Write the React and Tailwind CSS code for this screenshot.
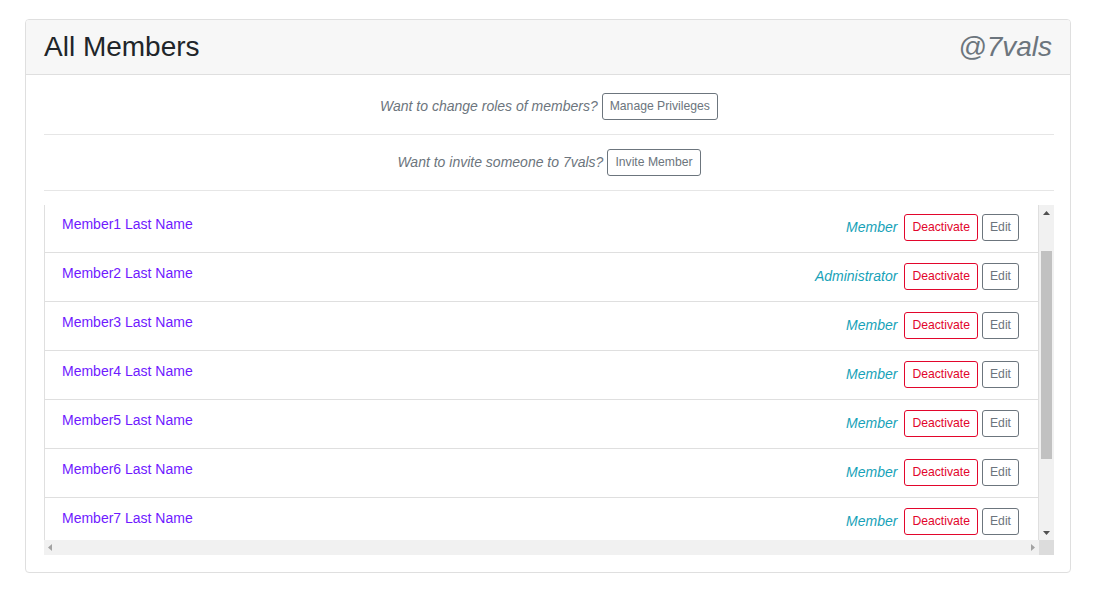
import { useEffect, useRef } from 'react'

const members = [
  { name: 'Owner Last Name', role: 'Administrator' },
  { name: 'Member1 Last Name', role: 'Member' },
  { name: 'Member2 Last Name', role: 'Administrator' },
  { name: 'Member3 Last Name', role: 'Member' },
  { name: 'Member4 Last Name', role: 'Member' },
  { name: 'Member5 Last Name', role: 'Member' },
  { name: 'Member6 Last Name', role: 'Member' },
  { name: 'Member7 Last Name', role: 'Member' },
  { name: 'Member8 Last Name', role: 'Member' },
  { name: 'Member9 Last Name', role: 'Member' },
]

function SmallButton({ children, tone = 'gray' }) {
  const colors =
    tone === 'red'
      ? 'border-[#e2062c] text-[#e2062c]'
      : 'border-[#6c757d] text-[#6c757d]'
  return (
    <button className={`border ${colors} rounded-[3px] bg-white px-[7px] py-[3px] text-[12.2px] leading-[19px]`}>
      {children}
    </button>
  )
}

// little triangle used for the scrollbar arrow buttons
function Arrow({ dir, color }) {
  const points = {
    up: '0,4 3.5,0 7,4',
    down: '0,0 3.5,4 7,0',
    left: '4,0 0,3.5 4,7',
    right: '0,0 4,3.5 0,7',
  }[dir]
  const horizontal = dir === 'left' || dir === 'right'
  return (
    <svg width={horizontal ? 4 : 7} height={horizontal ? 7 : 4} viewBox={horizontal ? '0 0 4 7' : '0 0 7 4'}>
      <polygon points={points} fill={color} />
    </svg>
  )
}

export default function App() {
  const listRef = useRef(null)

  useEffect(() => {
    if (listRef.current) {
      listRef.current.scrollTop = 51
    }
  }, [])

  return (
    <div className="bg-white min-h-[590px] pt-[19px] px-[25px] font-['Liberation_Sans',Arial,sans-serif]">
      <div className="w-[1046px] border border-[#dfdfdf] rounded-[4px] overflow-hidden">
        {/* Header */}
        <div className="h-[55px] bg-[#f7f7f7] border-b border-[#dfdfdf] px-[18px] flex items-center justify-between">
          <h3 className="text-[28px] leading-[34px] text-[#212529]">All Members</h3>
          <span className="text-[28px] leading-[34px] italic text-[#6c757d]">@7vals</span>
        </div>

        {/* Body */}
        <div className="pt-[18px] pl-[18px] pr-[16px] pb-[17px]">
          <div className="flex items-center justify-center gap-[4px] h-[26px]">
            <span className="text-[14px] italic text-[#6c757d]">Want to change roles of members?</span>
            <SmallButton>Manage Privileges</SmallButton>
          </div>
          <hr className="mt-[15px] mb-[14px] border-t border-[#e6e6e6]" />
          <div className="flex items-center justify-center gap-[4px] h-[26px]">
            <span className="text-[14px] italic text-[#6c757d]">Want to invite someone to 7vals?</span>
            <SmallButton>Invite Member</SmallButton>
          </div>
          <hr className="mt-[15px] mb-[14px] border-t border-[#e6e6e6]" />

          {/* Scroll box */}
          <div className="h-[350px] flex flex-col">
            <div className="flex flex-1 min-h-0">
              <div ref={listRef} className="flex-1 overflow-hidden">
                {members.map((m, i) => (
                  <div
                    key={i}
                    className={`flex items-start justify-between border-x border-b border-[#dfdfdf] ${i === 0 ? 'border-t' : ''} pl-[17px] pr-[19px] pt-[10px] pb-[11px]`}
                  >
                    <a href="#" className="text-[14px] leading-[21px] text-[#6f1aff]">
                      {m.name}
                    </a>
                    <div className="flex items-center h-[27px]">
                      <span className="text-[14px] italic text-[#17a2b8] mr-[7px]">{m.role}</span>
                      <div className="flex gap-[4px]">
                        <SmallButton tone="red">Deactivate</SmallButton>
                        <SmallButton>Edit</SmallButton>
                      </div>
                    </div>
                  </div>
                ))}
              </div>
              {/* vertical scrollbar */}
              <div className="w-[15px] bg-[#f1f1f1] flex flex-col">
                <div className="h-[15px] flex items-center justify-center">
                  <Arrow dir="up" color="#505050" />
                </div>
                <div className="flex-1 pt-[31px] px-[2px]">
                  <div className="h-[208px] bg-[#c1c1c1]" />
                </div>
                <div className="h-[15px] flex items-center justify-center">
                  <Arrow dir="down" color="#505050" />
                </div>
              </div>
            </div>
            {/* horizontal scrollbar */}
            <div className="h-[15px] flex">
              <div className="flex-1 bg-[#f1f1f1] flex items-center justify-between px-[4px]">
                <Arrow dir="left" color="#a3a3a3" />
                <Arrow dir="right" color="#a3a3a3" />
              </div>
              <div className="w-[15px] bg-[#dcdcdc]" />
            </div>
          </div>
        </div>
      </div>
    </div>
  )
}
